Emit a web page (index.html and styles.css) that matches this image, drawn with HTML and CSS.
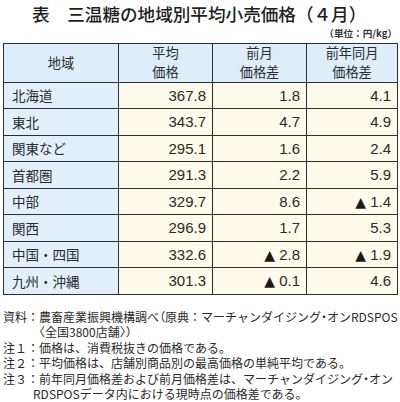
FILE: index.html
```html
<!DOCTYPE html>
<html lang="ja">
<head>
<meta charset="utf-8">
<link rel="stylesheet" href="styles.css">
</head>
<body>
<div class="page">
  <h1 class="title">表　三温糖の地域別平均小売価格（４月）</h1>
  <div class="unit">（単位：円/kg）</div>
  <table class="tbl">
    <colgroup>
      <col class="c1"><col class="c2"><col class="c3"><col class="c4">
    </colgroup>
    <thead>
      <tr>
        <th>地域</th>
        <th>平均<br>価格</th>
        <th>前月<br>価格差</th>
        <th>前年同月<br>価格差</th>
      </tr>
    </thead>
    <tbody>
      <tr><td class="lbl">北海道</td><td>367.8</td><td>1.8</td><td>4.1</td></tr>
      <tr><td class="lbl">東北</td><td>343.7</td><td>4.7</td><td>4.9</td></tr>
      <tr><td class="lbl">関東など</td><td>295.1</td><td>1.6</td><td>2.4</td></tr>
      <tr><td class="lbl">首都圏</td><td>291.3</td><td>2.2</td><td>5.9</td></tr>
      <tr><td class="lbl">中部</td><td>329.7</td><td>8.6</td><td><span class="tri">▲</span> 1.4</td></tr>
      <tr><td class="lbl">関西</td><td>296.9</td><td>1.7</td><td>5.3</td></tr>
      <tr><td class="lbl">中国・四国</td><td>332.6</td><td><span class="tri">▲</span> 2.8</td><td><span class="tri">▲</span> 1.9</td></tr>
      <tr><td class="lbl">九州・沖縄</td><td>301.3</td><td><span class="tri">▲</span> 0.1</td><td>4.6</td></tr>
    </tbody>
  </table>
  <div class="notes">
    <p class="note"><span class="line">資料：農畜産業振興機構調べ<span class="p">（</span>原典：マーチャンダイジング<span class="p">・</span>オンRDSPOS</span><br>〈全国3800店舗〉）</p>
    <p class="note">注１：価格は、消費税抜きの価格である。</p>
    <p class="note">注２：平均価格は、店舗別商品別の最高価格の単純平均である。</p>
    <p class="note"><span class="line">注３：前年同月価格差および前月価格差は、マーチャンダイジング<span class="p">・</span>オン</span><br>RDSPOSデータ内における現時点の価格差である。</p>
  </div>
</div>
</body>
</html>
```

FILE: styles.css
```css
html, body {
  margin: 0;
  padding: 0;
  background: #ffffff;
}
body {
  font-family: "Noto Sans CJK JP", "Noto Sans", sans-serif;
  color: #2a2a2a;
}
.page {
  width: 394px;
  padding: 3px 3px 0 3px;
}
.title {
  margin: 0;
  padding-left: 29px;
  font-size: 17.6px;
  font-weight: 500;
  line-height: 22px;
  color: #1e1e1e;
}
.unit {
  text-align: right;
  font-size: 9.6px;
  font-weight: 700;
  line-height: 14px;
  margin-top: 1px;
  color: #333;
}
.tbl {
  width: 394px;
  border-collapse: collapse;
  table-layout: fixed;
  margin-top: 3px;
}
.c1 { width: 115px; }
.c2 { width: 94px; }
.c3 { width: 94px; }
.c4 { width: 91px; }
.tbl th, .tbl td {
  border: 1.5px solid #2e2e2e;
  padding: 0;
}
.tbl th {
  background: #ddeefa;
  font-weight: 400;
  font-size: 13.2px;
  line-height: 18.5px;
  height: 37.5px;
  text-align: center;
  color: #2a2a2a;
}
.tbl td {
  height: 25.5px;
  background: #fefbea;
  text-align: right;
  padding-right: 6px;
  font-family: "Liberation Sans", Arial, sans-serif;
  font-size: 15px;
  color: #2a2a2a;
}
.tbl td.lbl {
  background: #e3f0fb;
  text-align: left;
  padding-left: 8px;
  padding-right: 0;
  font-family: "Noto Sans CJK JP", sans-serif;
  font-size: 13.5px;
}
.tri {
  font-family: "DejaVu Sans", sans-serif;
  font-size: 14px;
  color: #1a1a1a;
}
.notes {
  margin-top: 14px;
}
.note {
  margin: 0;
  font-size: 12px;
  line-height: 15.6px;
  padding-left: 30px;
  text-indent: -30px;
  color: #2a2a2a;
}
.p {
  font-feature-settings: "palt";
}
.line {
  white-space: nowrap;
}
```
